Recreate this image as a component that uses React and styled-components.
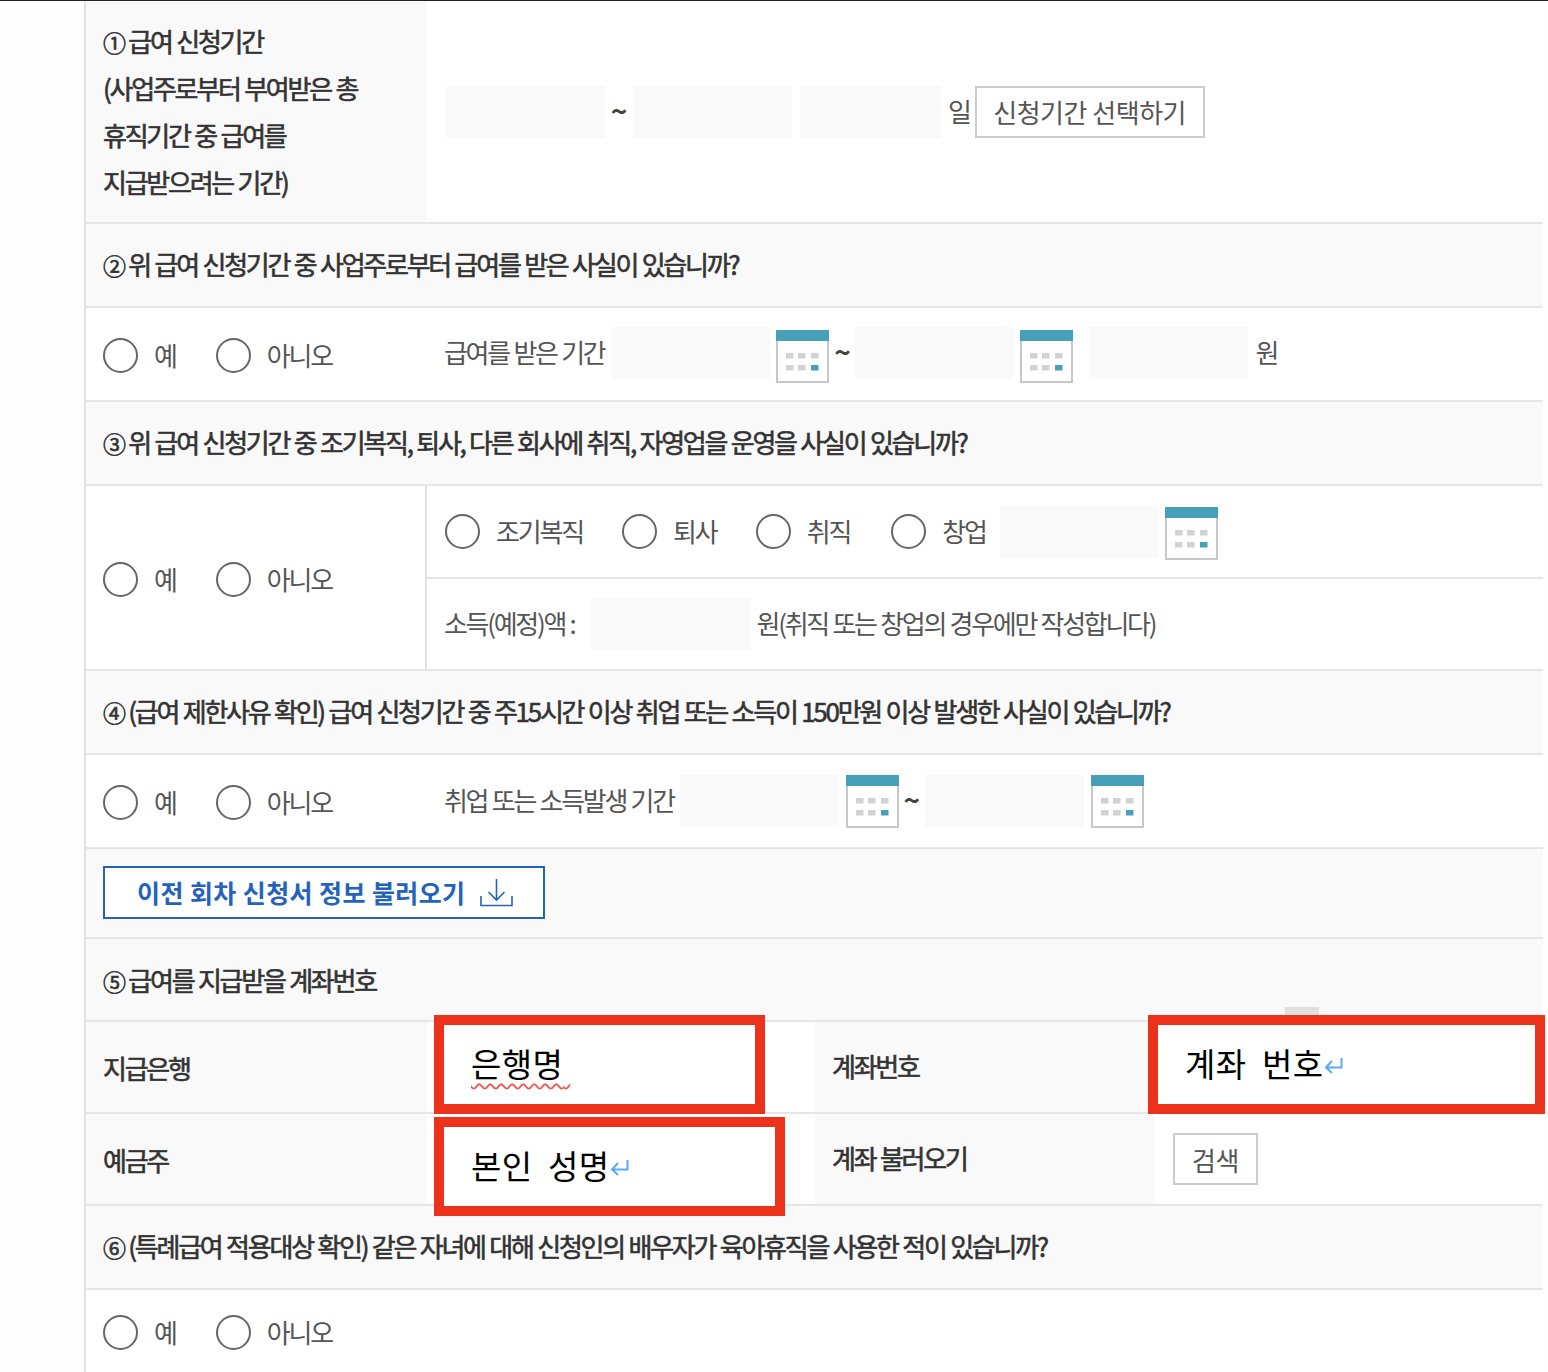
import styled, { createGlobalStyle } from "styled-components";

const GlobalStyle = createGlobalStyle`
  html, body {
    margin: 0;
    padding: 0;
    background: #fff;
  }
  body {
    font-family: "Noto Sans CJK KR", "Noto Sans", sans-serif;
    color: #444;
  }
`

const Page = styled.div`
  position: relative;
  width: 1548px;
  height: 1372px;
  overflow: hidden;
  border-top: 1px solid #222;
  box-sizing: border-box;
  background: #fefefe;
`
const Sheet = styled.div`
  margin-left: 84px;
  width: 1457px;
  border-left: 2px solid #e2e2e2;
  background: #fff;
`
const Row = styled.div`
  display: flex;
  height: ${(p) => p.$h}px;
  border-bottom: ${(p) => (p.$last ? "none" : "2px solid #e6e6e6")};
  box-sizing: content-box;
`
const HeadRow = styled(Row)`
  align-items: center;
  padding-left: 17px;
  background: #f9f9f9;
`
const Heading = styled.h3`
  margin: 0 0 ${(p) => p.$up ?? 4}px;
  font-size: 26px;
  font-weight: 400;
  letter-spacing: -2.25px;
  word-spacing: 1px;
  color: #333;
  -webkit-text-stroke: 0.6px #333;
  white-space: nowrap;
`
const Num = styled.span`
  font-size: 23px;
  line-height: 0;
`
const Th = styled.div`
  width: ${(p) => p.$w ?? 341}px;
  flex: none;
  box-sizing: border-box;
  display: flex;
  align-items: center;
  padding-left: 17px;
  background: ${(p) => (p.$plain ? "#fff" : "#f9f9f9")};
  border-right: ${(p) => (p.$line ? "2px solid #e2e2e2" : "none")};
`
const ThText = styled.div`
  margin-bottom: ${(p) => p.$up ?? 0}px;
  font-size: 26px;
  font-weight: 400;
  line-height: 47px;
  letter-spacing: -2.25px;
  word-spacing: 1px;
  color: #333;
  -webkit-text-stroke: 0.6px #333;
  white-space: nowrap;
`
const Td = styled.div`
  flex: ${(p) => (p.$w ? "none" : "1")};
  width: ${(p) => (p.$w ? `${p.$w}px` : "auto")};
  box-sizing: border-box;
  display: flex;
  align-items: center;
  padding-left: ${(p) => p.$pad ?? 17}px;
  padding-bottom: ${(p) => p.$pb ?? 0}px;
`
const SubRows = styled.div`
  flex: 1;
  display: flex;
  flex-direction: column;
`
const SubRow = styled.div`
  height: ${(p) => p.$h}px;
  display: flex;
  align-items: center;
  padding-left: ${(p) => p.$pad ?? 17}px;
  border-bottom: ${(p) => (p.$line ? "2px solid #e6e6e6" : "none")};
`
const Input = styled.div`
  width: ${(p) => p.$w ?? 159}px;
  height: 52px;
  flex: none;
  background: #f9f9f9;
  margin-left: ${(p) => p.$ml ?? 0}px;
`
const Text = styled.span`
  font-size: 26px;
  letter-spacing: -2.3px;
  word-spacing: 1px;
  color: #555;
  white-space: nowrap;
  margin-left: ${(p) => p.$ml ?? 0}px;
  margin-bottom: 3px;
`
const Tilde = styled.span`
  font-size: 28px;
  font-weight: 700;
  line-height: 1;
  color: #444;
  width: 14px;
  display: flex;
  justify-content: center;
  margin-left: ${(p) => p.$ml ?? 6}px;
  margin-right: ${(p) => p.$mr ?? 6}px;
  margin-bottom: 4px;
`
const OutlineButton = styled.button`
  height: 52px;
  width: ${(p) => p.$w}px;
  margin-left: ${(p) => p.$ml ?? 0}px;
  padding: 0;
  background: #fff;
  border: 2px solid #ccc;
  font-family: inherit;
  font-size: 26px;
  letter-spacing: ${(p) => p.$ls ?? -0.5}px;
  color: #555;
`
const RadioItem = styled.label`
  display: flex;
  align-items: center;
  margin-left: ${(p) => p.$ml ?? 0}px;
  padding-top: ${(p) => p.$pt ?? 0}px;
`
const Circle = styled.span`
  width: 31px;
  height: 31px;
  flex: none;
  border: 2px solid #666;
  border-radius: 50%;
  background: #fff;
`
const RadioText = styled.span`
  margin-left: 16px;
  margin-bottom: 2px;
  font-size: 26px;
  letter-spacing: -2.15px;
  color: #555;
  white-space: nowrap;
`
const LoadBar = styled(Row)`
  align-items: center;
  padding-left: 17px;
  background: #f9f9f9;
`
const LoadButton = styled.button`
  width: 442px;
  height: 53px;
  margin-bottom: 2px;
  box-sizing: border-box;
  display: flex;
  align-items: center;
  padding: 0 0 0 32px;
  background: #fff;
  border: 2px solid #2463bd;
  font-family: inherit;
  font-size: 25px;
  font-weight: 700;
  letter-spacing: 0.4px;
  color: #2463bd;
  white-space: nowrap;
  svg {
    margin-left: 14px;
  }
`
const Overlay = styled.div`
  position: absolute;
  left: ${(p) => p.$x}px;
  top: ${(p) => p.$y}px;
  width: ${(p) => p.$w}px;
  height: 99px;
  box-sizing: border-box;
  display: flex;
  align-items: center;
  padding: 0 0 4px 27px;
  background: #fff;
  border: 10px solid #ec321a;
  font-family: "Noto Sans CJK KR", sans-serif;
  font-size: 33px;
  letter-spacing: 0.4px;
  color: #000;
  white-space: pre;
`
const Squiggle = styled.span`
  text-decoration: underline wavy #ee5a50 2px;
  text-underline-offset: 6px;
`
const Chip = styled.div`
  position: absolute;
  left: 1285px;
  top: 1006px;
  width: 34px;
  height: 9px;
  background: #e0e0e0;
`

const CalendarIcon = ({ ml = 6, mt = 0 }) => (
  <svg width="53" height="53" viewBox="0 0 53 53" style={{ marginLeft: ml, marginTop: mt, flex: "none" }}>
    <rect x="1" y="1" width="51" height="51" fill="#fff" stroke="#c8c8c8" strokeWidth="2" />
    <rect width="53" height="11" fill="#46a0b8" />
    {[10, 22, 35].map((x) =>
      [23, 35].map((y) => (
        <rect
          key={`${x}-${y}`}
          x={x}
          y={y}
          width="7.5"
          height="5.5"
          fill={x === 35 && y === 35 ? "#46a0b8" : "#d2d2d2"}
        />
      ))
    )}
  </svg>
)

const DownloadIcon = () => (
  <svg width="33" height="29" viewBox="0 0 33 29" fill="none" stroke="#2463bd" strokeWidth="1.6">
    <path d="M1 18v9.5h31V18" />
    <path d="M16.5 1v21M8.5 14l8 8 8-8" />
  </svg>
)

const ReturnMark = () => (
  <svg width="19" height="17" viewBox="0 0 19 17" fill="none" stroke="#5aa9ff" strokeWidth="2" style={{ marginTop: 5 }}>
    <path d="M17.5 1v9.5H2M8 4l-6 6.5L8 16" />
  </svg>
)

const Radio = ({ label, ml, pt }) => (
  <RadioItem $ml={ml} $pt={pt}>
    <Circle />
    <RadioText>{label}</RadioText>
  </RadioItem>
)

const YesNo = () => (
  <>
    <Radio label="예" pt={3} />
    <Radio label="아니오" ml={40} pt={3} />
  </>
)

const App = () => {
  return (
    <Page>
      <GlobalStyle />
      <Sheet>
        <Row $h={221}>
          <Th>
            <ThText $up={1}>
              <Num>①</Num> 급여 신청기간<br />
              (사업주로부터 부여받은 총<br />
              휴직기간 중 급여를<br />
              지급받으려는 기간)
            </ThText>
          </Th>
          <Td $pad={19}>
            <Input />
            <Tilde $ml={7} $mr={7}>~</Tilde>
            <Input />
            <Input $w={141} $ml={8} />
            <Text $ml={7}>일</Text>
            <OutlineButton $w={230} $ml={5}>신청기간 선택하기</OutlineButton>
          </Td>
        </Row>
        <HeadRow $h={82}>
          <Heading><Num>②</Num> 위 급여 신청기간 중 사업주로부터 급여를 받은 사실이 있습니까?</Heading>
        </HeadRow>
        <Row $h={92}>
          <Th $plain><YesNo /></Th>
          <Td $pb={3}>
            <Text>급여를 받은 기간</Text>
            <Input $ml={7} />
            <CalendarIcon mt={7} />
            <Tilde>~</Tilde>
            <Input />
            <CalendarIcon mt={7} />
            <Input $ml={16} />
            <Text $ml={7}>원</Text>
          </Td>
        </Row>
        <HeadRow $h={82}>
          <Heading><Num>③</Num> 위 급여 신청기간 중 조기복직, 퇴사, 다른 회사에 취직, 자영업을 운영을 사실이 있습니까?</Heading>
        </HeadRow>
        <Row $h={183}>
          <Th $plain $line><YesNo /></Th>
          <SubRows>
            <SubRow $h={91} $line $pad={18}>
              <Radio label="조기복직" />
              <Radio label="퇴사" ml={39} />
              <Radio label="취직" ml={39} />
              <Radio label="창업" ml={41} />
              <Input $ml={14} />
              <CalendarIcon mt={4} />
            </SubRow>
            <SubRow $h={90}>
              <Text>소득(예정)액 :</Text>
              <Input $ml={16} />
              <Text $ml={7}>원(취직 또는 창업의 경우에만 작성합니다)</Text>
            </SubRow>
          </SubRows>
        </Row>
        <HeadRow $h={82}>
          <Heading><Num>④</Num> (급여 제한사유 확인) 급여 신청기간 중 주15시간 이상 취업 또는 소득이 150만원 이상 발생한 사실이 있습니까?</Heading>
        </HeadRow>
        <Row $h={92}>
          <Th $plain><YesNo /></Th>
          <Td $pb={1}>
            <Text>취업 또는 소득발생 기간</Text>
            <Input $ml={6} />
            <CalendarIcon ml={7} mt={2} />
            <Tilde>~</Tilde>
            <Input />
            <CalendarIcon ml={7} mt={2} />
          </Td>
        </Row>
        <LoadBar $h={88}>
          <LoadButton>
            이전 회차 신청서 정보 불러오기
            <DownloadIcon />
          </LoadButton>
        </LoadBar>
        <HeadRow $h={81}>
          <Heading $up={0}><Num>⑤</Num> 급여를 지급받을 계좌번호</Heading>
        </HeadRow>
        <Row $h={90}>
          <Th><ThText>지급은행</ThText></Th>
          <Td $w={388} />
          <Th $w={340}><ThText $up={3}>계좌번호</ThText></Th>
          <Td />
        </Row>
        <Row $h={90}>
          <Th><ThText>예금주</ThText></Th>
          <Td $w={388} />
          <Th $w={340}><ThText $up={3}>계좌 불러오기</ThText></Th>
          <Td $pad={18}>
            <OutlineButton $w={85}>검색</OutlineButton>
          </Td>
        </Row>
        <HeadRow $h={82}>
          <Heading><Num>⑥</Num> (특례급여 적용대상 확인) 같은 자녀에 대해 신청인의 배우자가 육아휴직을 사용한 적이 있습니까?</Heading>
        </HeadRow>
        <Row $h={82} $last>
          <Th $plain><YesNo /></Th>
        </Row>
      </Sheet>

      <Chip />
      <Overlay $x={434} $y={1014} $w={331}>
        <Squiggle>은행명{"\u2009"}</Squiggle>
      </Overlay>
      <Overlay $x={434} $y={1116} $w={351}>
        본인  성명<ReturnMark />
      </Overlay>
      <Overlay $x={1148} $y={1014} $w={397}>
        계좌  번호<ReturnMark />
      </Overlay>
    </Page>
  )
}

export default App
